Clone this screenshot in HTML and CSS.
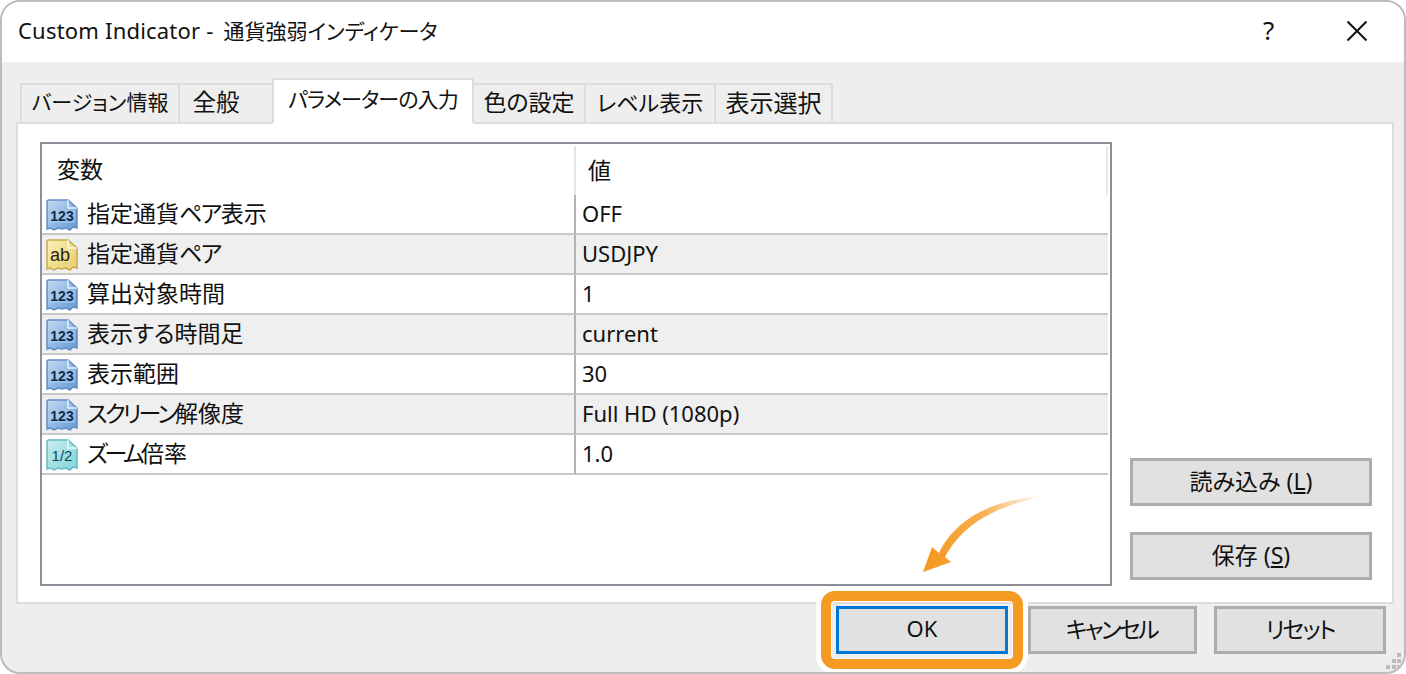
FILE: index.html
```html
<!DOCTYPE html>
<html lang="ja">
<head>
<meta charset="utf-8">
<title>Custom Indicator</title>
<link rel="stylesheet" href="styles.css">
</head>
<body>
<svg class="defs" width="0" height="0" aria-hidden="true">
  <defs>
    <linearGradient id="blueFill" x1="0" y1="0" x2="1" y2="1"><stop offset="0" stop-color="#c4dcf2"/><stop offset="1" stop-color="#6398d6"/></linearGradient>
    <linearGradient id="yellowFill" x1="0" y1="0" x2="1" y2="1"><stop offset="0" stop-color="#fbf0b8"/><stop offset="1" stop-color="#e6cc6c"/></linearGradient>
    <linearGradient id="tealFill" x1="0" y1="0" x2="1" y2="1"><stop offset="0" stop-color="#c8eeee"/><stop offset="1" stop-color="#7fd4d8"/></linearGradient>
    <linearGradient id="arrowFill" gradientUnits="userSpaceOnUse" x1="122" y1="0" x2="10" y2="60"><stop offset="0" stop-color="#f59a23" stop-opacity="0"/><stop offset=".5" stop-color="#f59a23" stop-opacity=".8"/><stop offset="1" stop-color="#f59a23"/></linearGradient>
  </defs>
</svg>
<main class="window">
  <header class="titlebar">
    <span class="title"><span class="latin">Custom Indicator - </span>通貨強弱インディケータ</span>
    <span class="help">?</span>
    <svg class="close" width="22" height="22" viewBox="0 0 22 22"><path d="M1.5 1.5 20.5 20.5M20.5 1.5 1.5 20.5" stroke="#111" stroke-width="2" fill="none"/></svg>
  </header>
  <section class="body">
    <nav class="tabs">
      <span class="tab t1">バージョン情報</span>
      <span class="tab t2">全般</span>
      <span class="tab active">パラメーターの入力</span>
      <span class="tab t4">色の設定</span>
      <span class="tab t5">レベル表示</span>
      <span class="tab t6">表示選択</span>
    </nav>
    <div class="panel">
      <div class="grid">
        <div class="row head"><div class="name">変数</div><div class="val">値</div></div>
        <div class="row"><div class="name"><svg class="icon" viewBox="0 0 32 32"><path class="doc blue" d="M1 3Q1 1 3 1H22L31 9V29L27 28 24 31 20 29 16 30 12 29 8 31 4 29 1 30Z"/><path class="fold" d="M22 1V9H31"/><rect class="band" x="3" y="11" width="26" height="13"/><text class="glyph" x="16" y="22">123</text></svg><span>指定通貨<span class="k1">ペア</span>表示</span></div><div class="val">OFF</div></div>
        <div class="row alt"><div class="name"><svg class="icon" viewBox="0 0 32 32"><path class="doc yellow" d="M1 3Q1 1 3 1H22L31 9V29L27 28 24 31 20 29 16 30 12 29 8 31 4 29 1 30Z"/><path class="fold" d="M22 1V9H31"/><text class="glyph ab" x="14" y="22">ab</text></svg><span>指定通貨<span class="k1">ペア</span></span></div><div class="val">USDJPY</div></div>
        <div class="row"><div class="name"><svg class="icon" viewBox="0 0 32 32"><path class="doc blue" d="M1 3Q1 1 3 1H22L31 9V29L27 28 24 31 20 29 16 30 12 29 8 31 4 29 1 30Z"/><path class="fold" d="M22 1V9H31"/><rect class="band" x="3" y="11" width="26" height="13"/><text class="glyph" x="16" y="22">123</text></svg><span>算出対象時間</span></div><div class="val">1</div></div>
        <div class="row alt"><div class="name"><svg class="icon" viewBox="0 0 32 32"><path class="doc blue" d="M1 3Q1 1 3 1H22L31 9V29L27 28 24 31 20 29 16 30 12 29 8 31 4 29 1 30Z"/><path class="fold" d="M22 1V9H31"/><rect class="band" x="3" y="11" width="26" height="13"/><text class="glyph" x="16" y="22">123</text></svg><span>表示する時間足</span></div><div class="val">current</div></div>
        <div class="row"><div class="name"><svg class="icon" viewBox="0 0 32 32"><path class="doc blue" d="M1 3Q1 1 3 1H22L31 9V29L27 28 24 31 20 29 16 30 12 29 8 31 4 29 1 30Z"/><path class="fold" d="M22 1V9H31"/><rect class="band" x="3" y="11" width="26" height="13"/><text class="glyph" x="16" y="22">123</text></svg><span>表示範囲</span></div><div class="val">30</div></div>
        <div class="row alt"><div class="name"><svg class="icon" viewBox="0 0 32 32"><path class="doc blue" d="M1 3Q1 1 3 1H22L31 9V29L27 28 24 31 20 29 16 30 12 29 8 31 4 29 1 30Z"/><path class="fold" d="M22 1V9H31"/><rect class="band" x="3" y="11" width="26" height="13"/><text class="glyph" x="16" y="22">123</text></svg><span><span class="k2">スクリーン</span>解像度</span></div><div class="val">Full HD (1080p)</div></div>
        <div class="row"><div class="name"><svg class="icon" viewBox="0 0 32 32"><path class="doc teal" d="M1 3Q1 1 3 1H22L31 9V29L27 28 24 31 20 29 16 30 12 29 8 31 4 29 1 30Z"/><path class="fold" d="M22 1V9H31"/><text class="glyph half" x="16" y="22">1/2</text></svg><span><span class="k3">ズーム</span>倍率</span></div><div class="val">1.0</div></div>
      </div>
      <div class="side">
        <button class="btn load">読み込み (<u>L</u>)</button>
        <button class="btn save">保存 (<u>S</u>)</button>
      </div>
    </div>
    <footer class="footer">
      <button class="btn ok">OK<span class="ring"></span></button>
      <button class="btn cancel">キャンセル</button>
      <button class="btn reset">リセット</button>
    </footer>
    <svg class="arrow" width="130" height="84" viewBox="0 0 130 84"><path fill="url(#arrowFill)" d="M125 2C90 4 40 14 18 59L11 53 2 78 30 68 24 63C45 24 85 10 125 2Z"/></svg>
    <svg class="grip" width="16" height="18" viewBox="0 0 16 18"><path fill="#bbb" d="M11 0h4v4h-4zM6 6h4v4H6zM11 6h4v4h-4zM0 12h4v4H0zM6 12h4v4H6zM11 12h4v4h-4z"/></svg>
  </section>
</main>
</body>
</html>
```
FILE: styles.css
```css
* { box-sizing: border-box; }
html, body { margin: 0; padding: 0; background: #fff; }
body {
  width: 1406px;
  height: 674px;
  overflow: hidden;
  color: #111;
  font-family: "Noto Sans", "Noto Sans CJK JP", sans-serif;
  font-size: 22px;
  font-feature-settings: "palt";
}
.defs { position: absolute; }
.window {
  width: 1406px;
  height: 674px;
  border: 2px solid #bcbcbc;
  border-radius: 20px;
  overflow: hidden;
  display: flex;
  flex-direction: column;
  background: #eee;
}
.titlebar {
  height: 60px;
  flex: none;
  background: #fff;
  display: flex;
  align-items: center;
  padding: 0 36px 2px 16px;
}
.title { flex: 1; font-size: 21px; padding-bottom: 2px; }
.latin { font-size: 22px; margin-right: 4px; letter-spacing: .2px; }
.help { width: 88px; font-size: 26px; padding-left: 5px; padding-bottom: 2px; }
.close { flex: none; }
.body {
  flex: 1;
  min-height: 0;
  position: relative;
  display: flex;
  flex-direction: column;
  padding: 16px 10px 18px 14px;
}
.tabs {
  display: flex;
  align-items: flex-end;
  height: 46px;
  margin-bottom: -2px;
  padding-left: 4px;
  position: relative;
  z-index: 1;
  flex: none;
}
.tab {
  height: 41px;
  border: 2px solid #ddd;
  margin-left: -2px;
  display: flex;
  align-items: center;
  justify-content: center;
  font-size: 23px;
  white-space: nowrap;
  background: #eee;
  padding-bottom: 5px;
}
.tab:first-child { margin-left: 0; }
.t1 { width: 160px; font-size: 21px; }
.t2 { width: 96px; padding-right: 20px; font-size: 23.5px; }
.active { width: 202px; height: 46px; background: #fff; border-bottom-color: #fff; position: relative; z-index: 1; padding-bottom: 6px; font-size: 21px; letter-spacing: -.9px; }
.t4 { width: 114px; }
.t5 { width: 132px; font-size: 22px; }
.t6 { width: 119px; font-size: 24px; }
.panel {
  flex: 1;
  min-height: 0;
  background: #fff;
  border: 2px solid #ddd;
  display: flex;
  gap: 18px;
  padding: 18px 20px 16px 22px;
}
.grid {
  width: 1072px;
  flex: none;
  border: 2px solid #8b8f99;
  padding-right: 2px;
  font-size: 22px;
}
.row {
  display: grid;
  grid-template-columns: 532px 1fr;
  height: 40px;
  border-bottom: 2px solid #c8c8c8;
  align-items: stretch;
}
.row.alt { background: #efefef; }
.name {
  display: flex;
  align-items: center;
  gap: 9px;
  padding-left: 4px;
  font-size: 23px;
}
.name > span { padding-bottom: 5px; }
.k1 { letter-spacing: -1.5px; }
.k2 { letter-spacing: -2.8px; }
.k3 { letter-spacing: -3.6px; }
.val {
  display: flex;
  align-items: center;
  border-left: 2px solid #b4b4b4;
  padding-left: 6px;
  padding-bottom: 4px;
}
.head { height: 51px; border-bottom: 0; }
.head .name { padding-left: 15px; padding-bottom: 4px; }
.head .val { padding-left: 12px; padding-bottom: 4px; border-left-color: #e4e4e4; border-right: 2px solid #e8e8e8; margin-top: 2px; font-size: 23px; }
.icon { width: 32px; height: 32px; flex: none; }
.doc { stroke-width: 1.5; }
.blue { fill: url(#blueFill); stroke: #5f8fc4; }
.yellow { fill: url(#yellowFill); stroke: #c6a94e; }
.teal { fill: url(#tealFill); stroke: #66bcc4; }
.fold { fill: none; stroke: #fff; stroke-width: 1.5; opacity: .8; }
.band { fill: #a9c9ea; opacity: .6; }
.glyph {
  font-family: "Liberation Sans", sans-serif;
  font-size: 14px;
  font-weight: 700;
  fill: #0e2a52;
  text-anchor: middle;
}
.ab { font-size: 18px; font-weight: 400; fill: #2a2410; }
.half { font-size: 15px; font-weight: 400; fill: #0f4a56; }
.side {
  width: 242px;
  flex: none;
  display: flex;
  flex-direction: column;
  justify-content: flex-end;
  gap: 26px;
  padding-bottom: 6px;
}
.btn {
  height: 48px;
  border: 3px solid #adadad;
  background: #e1e1e1;
  color: #111;
  font: inherit;
  font-size: 23px;
  padding: 0 0 4px;
  position: relative;
}
.footer {
  height: 48px;
  flex: none;
  margin-top: 2px;
  padding-right: 8px;
  display: flex;
  justify-content: flex-end;
}
.ok { width: 172px; border-color: #0078d7; margin-right: 20px; font-size: 22px; }
.cancel { width: 169px; margin-right: 17px; letter-spacing: -2.6px; padding-right: 2px; }
.reset { width: 172px; letter-spacing: -2px; }
.ring {
  position: absolute;
  left: -18px;
  right: -18px;
  top: -18px;
  bottom: -18px;
  border: 10px solid #f59a23;
  border-radius: 14px;
  box-shadow: 0 0 0 5px #fff, inset 0 0 0 1px #fff;
  pointer-events: none;
}
.arrow { position: absolute; left: 919px; top: 432px; }
.grip { position: absolute; right: 2px; bottom: 1px; }
```
